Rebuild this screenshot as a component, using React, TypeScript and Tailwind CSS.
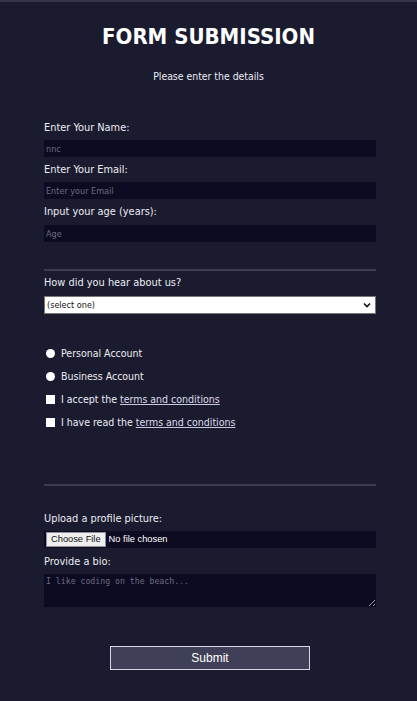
import React from "react";

const font = { fontFamily: '"DejaVu Sans Condensed", "DejaVu Sans", sans-serif' };

function Label({ children, className = "" }: { children: React.ReactNode; className?: string }) {
  return (
    <div className={"h-[14px] text-[10.9px] leading-[14px] text-[#ececf2] " + className}>{children}</div>
  );
}

function TextField({ placeholder, className = "" }: { placeholder: string; className?: string }) {
  return (
    <input
      placeholder={placeholder}
      className={
        "block h-[17px] w-full bg-[#0c0b22] px-[2px] text-[9px] text-[#d0d0dc] placeholder:text-[#6c6c80] outline-none " +
        className
      }
    />
  );
}

function Radio({ label, className = "" }: { label: string; className?: string }) {
  return (
    <div className={"flex h-[14px] items-center " + className}>
      <span className="ml-[2px] inline-block h-[9px] w-[9px] rounded-full bg-white" />
      <span className="ml-[6px] text-[10.5px] leading-[14px] text-[#ececf2]">{label}</span>
    </div>
  );
}

function Check({ pre, className = "" }: { pre: string; className?: string }) {
  return (
    <div className={"flex h-[14px] items-center " + className}>
      <span className="ml-[2px] inline-block h-[9px] w-[9px] bg-white" />
      <span className="ml-[6px] text-[10.5px] leading-[14px] text-[#ececf2]">
        {pre}
        <span className="underline decoration-[#c8c8dc] text-[#dcdcea]">terms and conditions</span>
      </span>
    </div>
  );
}

export default function App() {
  return (
    <div className="min-h-[701px] w-[417px] border-t-2 border-[#34344a] bg-[#1b1b2f]" style={font}>
      <div className="pt-[22px] text-center text-[22px] font-bold leading-[26px] text-white">FORM SUBMISSION</div>
      <div className="mt-[19px] text-center text-[10.4px] leading-[14px] text-[#ececf2]">Please enter the details</div>

      <div className="mx-[44px] w-[332px]">
        <Label className="mt-[38px]">Enter Your Name:</Label>
        <TextField placeholder="nnc" className="mt-[5px]" />
        <Label className="mt-[6px]">Enter Your Email:</Label>
        <TextField placeholder="Enter your Email" className="mt-[5px]" />
        <Label className="mt-[6px]">Input your age (years):</Label>
        <TextField placeholder="Age" className="mt-[6px]" />

        <div className="mt-[27px] h-[2px] w-full bg-[#3c3c52]" />

        <Label className="mt-[5px]">How did you hear about us?</Label>
        <div className="mt-[6px] flex h-[18px] w-full items-center justify-between border border-[#767676] bg-white px-[2px]">
          <span className="text-[9px] leading-[12px] text-[#111]">(select one)</span>
          <svg width="10" height="10" viewBox="0 0 10 10" className="mr-[1px]">
            <path d="M2 3.5 L5 6.5 L8 3.5" stroke="#111" strokeWidth="1.6" fill="none" />
          </svg>
        </div>

        <Radio label="Personal Account" className="mt-[32px]" />
        <Radio label="Business Account" className="mt-[9px]" />
        <Check pre="I accept the " className="mt-[9px]" />
        <Check pre="I have read the " className="mt-[9px]" />

        <div className="mt-[55px] h-[2px] w-full bg-[#3c3c52]" />

        <Label className="mt-[26px]">Upload a profile picture:</Label>
        <div className="mt-[5px] flex h-[17px] w-full items-center bg-[#0c0b22]">
          <span
            className="ml-[2px] flex h-[15px] items-center border border-[#8f8f9d] bg-[#efefef] px-[4px] text-[9.3px] text-[#111]"
            style={{ fontFamily: '"Liberation Sans", Arial, sans-serif' }}
          >
            Choose File
          </span>
          <span
            className="ml-[3px] text-[9.3px] text-white"
            style={{ fontFamily: '"Liberation Sans", Arial, sans-serif' }}
          >
            No file chosen
          </span>
        </div>
        <Label className="mt-[7px]">Provide a bio:</Label>
        <textarea
          placeholder="I like coding on the beach..."
          className="mt-[5px] block h-[33px] w-full bg-[#0c0b22] px-[2px] py-[1px] text-[8.2px] text-[#d0d0dc] placeholder:text-[#6c6c80] outline-none"
          style={{ fontFamily: '"DejaVu Sans Mono", monospace' }}
        />

        <div className="mt-[39px] flex justify-center">
          <button
            className="h-[24px] w-[200px] border border-[#d8d8e4] bg-[#3f3f58] text-[12px] text-white"
            style={{ fontFamily: '"Liberation Sans", Arial, sans-serif' }}
          >
            Submit
          </button>
        </div>
      </div>
    </div>
  );
}
